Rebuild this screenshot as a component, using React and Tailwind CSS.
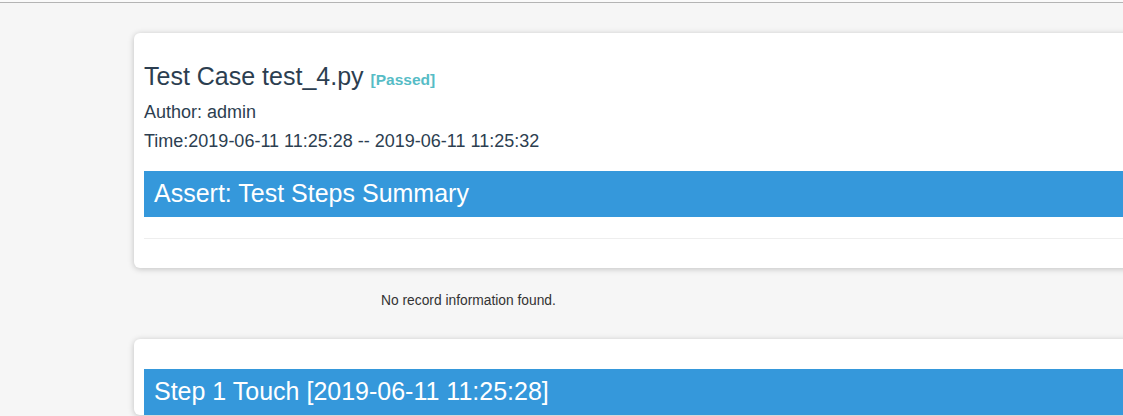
import React from "react";

export default function App() {
  return (
    <div className="h-[416px] overflow-hidden bg-[#f6f6f6] font-['Liberation_Sans',Arial,sans-serif] text-[#2c3e50]">
      {/* top rule */}
      <div className="h-[2px] bg-[#fafafa]" />
      <div className="h-px bg-[#b4b4b4]" />

      {/* test case card */}
      <div className="ml-[134px] mt-[30px] w-[1010px] rounded-md bg-white px-[10px] pb-[29px] pt-[28px] shadow-[0_1px_6px_rgba(0,0,0,0.22)]">
        <h3 className="text-[25px] leading-[30px]">
          Test Case test_4.py{" "}
          <span className="text-[15.5px] font-bold text-[#56bcc6]">[Passed]</span>
        </h3>
        <p className="mt-[3px] text-[18px] leading-[28px]">Author: admin</p>
        <p className="mt-px text-[18px] leading-[28px]">
          Time:2019-06-11 11:25:28 -- 2019-06-11 11:25:32
        </p>

        <div className="mt-[16px] flex h-[46px] items-center bg-[#3598db] px-[10px] text-[25px] text-white">
          Assert: Test Steps Summary
        </div>

        <div className="mt-[21px] h-px bg-[#eeeeee]" />
      </div>

      <p className="mt-[23px] pl-[381px] text-[13.8px] leading-[20px] text-[#333]">
        No record information found.
      </p>

      {/* step card */}
      <div className="ml-[134px] mt-[28px] w-[1010px] rounded-md bg-white px-[10px] pt-[30px] shadow-[0_1px_6px_rgba(0,0,0,0.22)]">
        <div className="flex h-[46px] items-center bg-[#3598db] px-[10px] text-[25px] text-white">
          Step 1 Touch [2019-06-11 11:25:28]
        </div>
      </div>
    </div>
  );
}
